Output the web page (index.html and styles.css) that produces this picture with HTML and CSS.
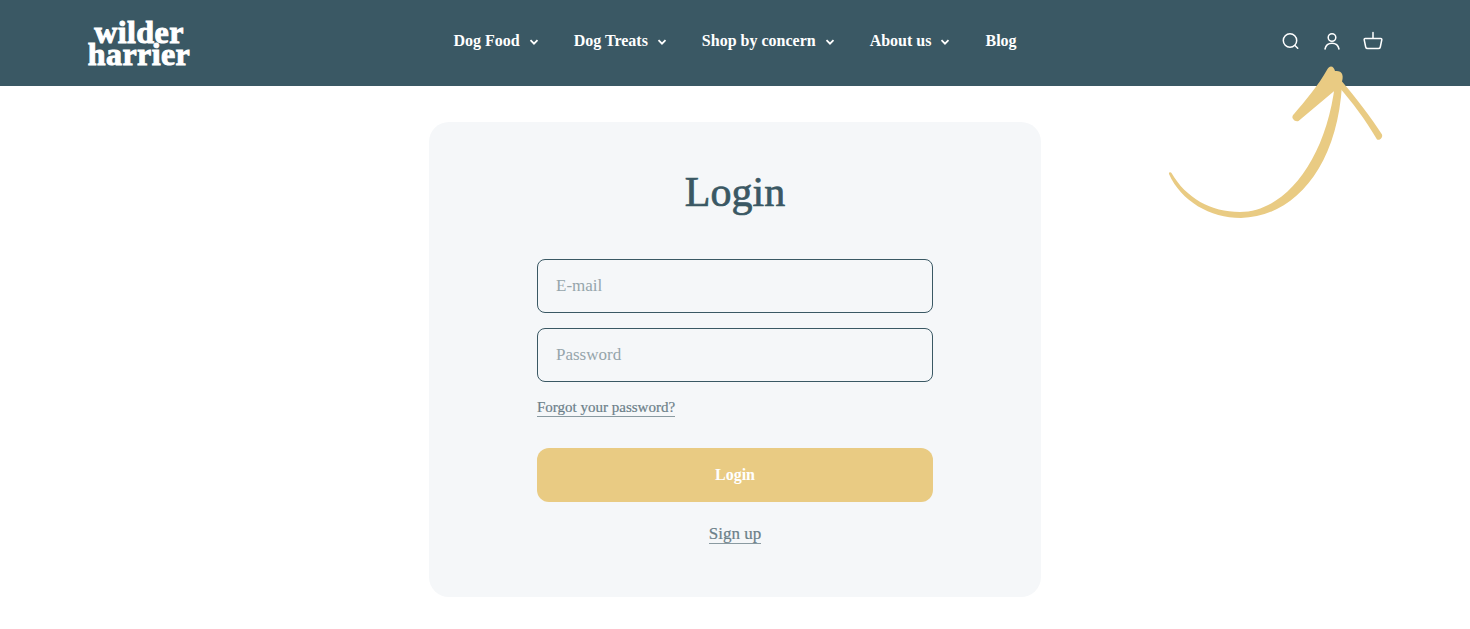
FILE: index.html
```html
<!DOCTYPE html>
<html lang="en">
<head>
    <meta charset="UTF-8">
    <title>Login</title>
    <link rel="stylesheet" href="styles.css">
</head>
<body>
    <header class="site-header">
        <a class="logo" href="#">wilder<br>harrier</a>
        <nav class="main-nav">
            <a href="#">Dog Food <svg class="chevron" viewBox="0 0 10 6"><path d="M1.5 1.2 5 4.7l3.5-3.5"/></svg></a>
            <a href="#">Dog Treats <svg class="chevron" viewBox="0 0 10 6"><path d="M1.5 1.2 5 4.7l3.5-3.5"/></svg></a>
            <a href="#">Shop by concern <svg class="chevron" viewBox="0 0 10 6"><path d="M1.5 1.2 5 4.7l3.5-3.5"/></svg></a>
            <a href="#">About us <svg class="chevron" viewBox="0 0 10 6"><path d="M1.5 1.2 5 4.7l3.5-3.5"/></svg></a>
            <a href="#">Blog</a>
        </nav>
        <div class="header-icons">
            <svg class="icon" viewBox="0 0 20 20"><circle cx="9" cy="9.500" r="6.700"/><path d="m14 14.500 2.700 2.700"/></svg>
            <svg class="icon" viewBox="0 0 20 20"><circle cx="10" cy="6.500" r="3.800"/><path d="M3 18c.8-3.800 3.600-5.800 7-5.800s6.200 2 7 5.800"/></svg>
            <svg class="icon" viewBox="0 0 20 20"><path d="M10 1.500V7M2.200 7.500h15.600c.8 0 1.200.6 1 1.300l-1.500 7.200c-.2 1-1 1.600-2 1.600H4.700c-1 0-1.800-.6-2-1.600L1.200 8.800c-.2-.7.2-1.300 1-1.300Z"/></svg>
        </div>
    </header>

    <main class="page">
        <section class="login-card">
            <h1>Login</h1>
            <form class="login-form">
                <input class="field" type="text" placeholder="E-mail">
                <input class="field" type="password" placeholder="Password">
                <a class="forgot" href="#">Forgot your password?</a>
                <button class="submit" type="button">Login</button>
                <a class="signup" href="#">Sign up</a>
            </form>
        </section>
    </main>

    <!-- hand drawn arrow pointing at the account icon -->
    <svg class="arrow" viewBox="1160 60 230 165">
        <path d="M1169 174C1181 201 1210 218 1241 218C1292 217 1337 170 1342 85L1335 84C1326 160 1285 212 1240 212C1211 212 1186 198 1171.500 173C1170.500 171.500 1168.500 172.500 1169 174Z"/>
        <path d="M1331 66.500C1333 66.500 1334 68 1335 71C1337 71 1340 71 1341.500 73C1343 75 1343 78 1342 81.500C1356 98 1371 117 1382 134.500C1383 137.500 1380 141 1377 139.500C1365 119 1352 102 1339 87L1298.500 121C1296.500 122 1293.500 120.500 1292.500 118C1292 116.500 1293 115 1294 114C1305 101 1318 86 1327.500 69C1328.500 67.500 1329.500 66.500 1331 66.500Z"/>
    </svg>
</body>
</html>
```

FILE: styles.css
```css
body {
    margin: 0;
    background: #fff;
    font-family: "Liberation Serif", "DejaVu Serif", serif;
    color: #3a5864;
}

a {
    color: inherit;
    text-decoration: none;
}

.site-header {
    height: 86px;
    box-sizing: border-box;
    padding: 0 87px;
    display: grid;
    grid-template-columns: 1fr auto 1fr;
    align-items: center;
    background: #3a5864;
    color: #fff;
}

.logo {
    display: block;
    width: 104px;
    text-align: center;
    font-size: 32px;
    font-weight: bold;
    line-height: 22px;
    letter-spacing: 0.4px;
    -webkit-text-stroke: 1px #fff;
}

.main-nav {
    display: flex;
    gap: 35px;
    font-size: 16px;
    font-weight: bold;
    margin-top: -4px;
}

.main-nav a {
    display: flex;
    align-items: center;
    gap: 9px;
}

.chevron {
    width: 10px;
    height: 6px;
    fill: none;
    stroke: #fff;
    stroke-width: 1.8;
    margin-top: 2px;
}

.header-icons {
    display: flex;
    justify-content: flex-end;
    gap: 21px;
    margin-top: -4px;
}

.icon {
    width: 20px;
    height: 20px;
    fill: none;
    stroke: #fff;
    stroke-width: 1.5;
    stroke-linecap: round;
}

.page {
    display: flex;
    justify-content: center;
    padding: 36px 0 32px;
}

.login-card {
    width: 612px;
    height: 475px;
    box-sizing: border-box;
    padding-top: 45px;
    background: #f5f7f9;
    border-radius: 20px;
    text-align: center;
}

h1 {
    margin: 0 0 42px;
    font-size: 42px;
    line-height: 50px;
    font-weight: normal;
    -webkit-text-stroke: 0.7px #3a5864;
}

.login-form {
    width: 396px;
    margin: 0 auto;
    display: flex;
    flex-direction: column;
    align-items: center;
}

.field {
    width: 100%;
    height: 54px;
    box-sizing: border-box;
    padding: 0 18px;
    margin-bottom: 15px;
    border: 1px solid #3a5864;
    border-radius: 8px;
    background: transparent;
    font-family: inherit;
    font-size: 17px;
    color: #3a5864;
}

.field::placeholder {
    color: #96a5ab;
    opacity: 1;
}

.forgot {
    align-self: flex-start;
    margin-top: 2px;
    font-size: 15px;
    line-height: 17px;
    color: #6c8089;
    border-bottom: 1px solid #8a9aa1;
    -webkit-text-stroke: 0.2px #6c8089;
}

.submit {
    width: 100%;
    height: 54px;
    margin-top: 31px;
    border: 0;
    border-radius: 12px;
    background: #e9cb83;
    color: #fff;
    font-family: inherit;
    font-size: 16px;
    font-weight: bold;
}

.signup {
    margin-top: 22px;
    font-size: 17px;
    line-height: 19px;
    color: #6c8089;
    border-bottom: 1px solid #8a9aa1;
    -webkit-text-stroke: 0.2px #6c8089;
}

.arrow {
    position: absolute;
    left: 1160px;
    top: 60px;
    width: 230px;
    height: 165px;
    fill: #e9cb83;
}
```
